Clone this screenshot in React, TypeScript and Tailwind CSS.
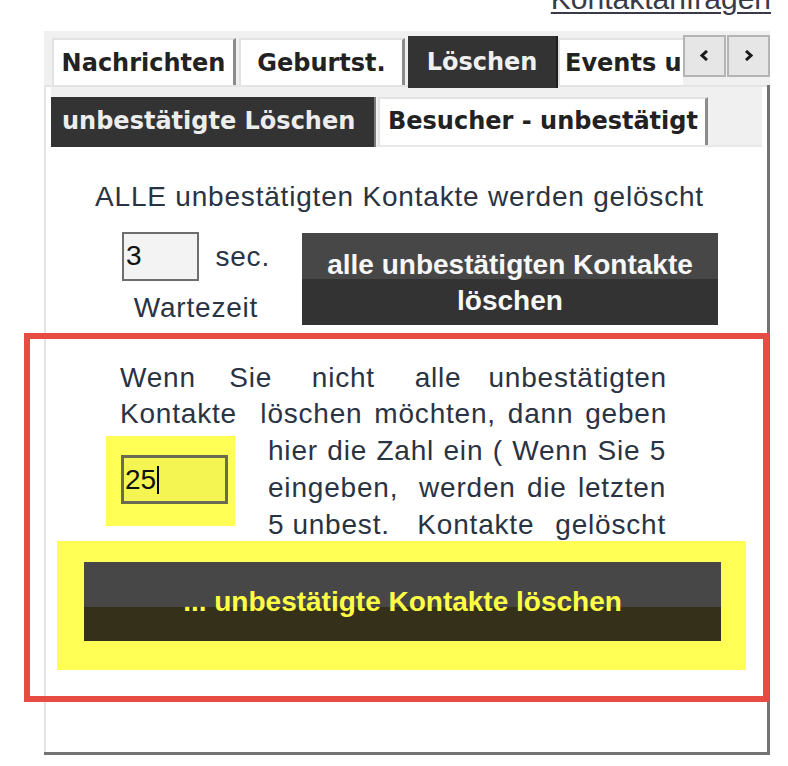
import React from "react";

const body = "font-['Liberation_Sans',Arial,sans-serif]";
const pix = "font-['DejaVu_Sans',Verdana,sans-serif] font-bold";

const grow: Record<number, string> = {
  0: "grow-0",
  1: "grow",
  2: "grow-[2]",
  3: "grow-[3]",
  4: "grow-[4]",
  5: "grow-[5]",
};

function Justified({ words, gaps }: { words: string[]; gaps: number[] }) {
  return (
    <div className="flex whitespace-nowrap">
      {words.map((w, i) => (
        <React.Fragment key={i}>
          {i > 0 && <span className={`basis-[8px] ${grow[gaps[i - 1]]}`} />}
          <span>{w}</span>
        </React.Fragment>
      ))}
    </div>
  );
}

function Tab({
  label,
  width,
  active = false,
  last = false,
}: {
  label: string;
  width: string;
  active?: boolean;
  last?: boolean;
}) {
  if (active) {
    return (
      <div
        className={`relative z-10 mb-[-3px] flex h-[52px] ${width} justify-center border-r-2 border-[#1f1f1f] bg-[#333333] pt-[14px] text-[24px] leading-[24px] text-[#f0f0f0]`}
      >
        {label}
      </div>
    );
  }
  return (
    <div
      className={`flex h-[47px] ${width} whitespace-nowrap border-l-2 border-t-2 border-[#e2e2e2] bg-white pt-[11px] text-[24px] leading-[24px] text-[#222] ${
        last ? "justify-start pl-[5px]" : "justify-center border-r-[3px] border-r-[#8c8c8c]"
      }`}
    >
      {label}
    </div>
  );
}

function Arrow({ dir }: { dir: "l" | "r" }) {
  return (
    <div className="flex h-[42px] w-[43px] justify-center border-2 border-[#b4b4b4] bg-[#e6e6e6] pt-[13px]">
      <svg width="9" height="11" viewBox="0 0 9 11">
        <polyline
          points={dir === "l" ? "7,1 2,5.5 7,10" : "2,1 7,5.5 2,10"}
          fill="none"
          stroke="#1a1a1a"
          strokeWidth="3"
        />
      </svg>
    </div>
  );
}

export default function App() {
  return (
    <div className={`relative h-[766px] w-[788px] overflow-hidden bg-white ${body}`}>
      {/* link cut off by the top edge */}
      <div className="flex h-[31px] justify-end pr-[17px]">
        <a className="mt-[-16px] h-[30px] text-[30px] leading-[30px] text-[#383a48] underline decoration-2 underline-offset-[3px]">
          Kontaktanfragen
        </a>
      </div>

      <div className="ml-[44px] w-[726px]">
        {/* main tab strip */}
        <div className={`flex h-[54px] items-end bg-[#f0f0f0] pl-[8px] ${pix}`}>
          <div className="flex flex-1 items-end gap-[3px]">
            <Tab label="Nachrichten" width="w-[184px]" />
            <Tab label="Geburtst." width="w-[166px]" />
          </div>
          <div className="flex items-end">
            <Tab label="Löschen" width="w-[150px]" active />
            <Tab label="Events u" width="w-[125px]" last />
          </div>
          <div className="mb-[8px] flex self-end gap-[1px]">
            <Arrow dir="l" />
            <Arrow dir="r" />
          </div>
        </div>

        {/* panel */}
        <div className="border-b-[3px] border-r-[3px] border-[#737373]">
          <div className="h-[667px] border-l-2 border-t-2 border-[#e4e4e4] bg-white px-[5px] pb-[4px]">
            {/* sub tabs */}
            <div className={`flex h-[58px] items-end bg-[#f0f0f0] ${pix}`}>
              <div className="relative z-10 mb-[-2px] h-[50px] w-[325px] border-r-2 border-[#7a7a7a] bg-[#333333] pl-[11px] pt-[12px] text-[24px] leading-[24px] text-[#ededed]">
                unbestätigte Löschen
              </div>
              <div className="ml-[2px] h-[48px] w-[330px] border-l-2 border-t-2 border-r-[3px] border-[#e2e2e2] border-r-[#8c8c8c] bg-white pl-[8px] pt-[10px] text-[24px] leading-[24px] text-[#222]">
                Besucher - unbestätigt
              </div>
            </div>

            {/* content */}
            <div className="h-[605px] border-t-2 border-[#e8e8e8] bg-white pt-[33px] text-[28px] tracking-[0.8px] text-[#2a3342]">
              <div className="pr-[14px] text-center leading-[34px]">
                ALLE unbestätigten Kontakte werden gelöscht
              </div>

              <div className="mt-[18px] flex pl-[71px]">
                <div className="flex w-[148px] flex-col items-center">
                  <div className="flex w-full items-center">
                    <div className="h-[49px] w-[78px] border-2 border-[#6e6e6e] bg-[#f3f3f3] pl-[2px] pt-[5px] leading-[34px] text-[#111]">
                      3
                    </div>
                    <span className="ml-[16px] leading-[34px]">sec.</span>
                  </div>
                  <div className="mt-[10px] leading-[34px]">Wartezeit</div>
                </div>
                <button className="ml-[32px] mt-[1px] h-[92px] w-[416px] bg-[linear-gradient(to_bottom,#474747_50%,#333333_50%)] pt-[8px] text-center text-[28px] font-bold leading-[36px] tracking-normal text-[#f7f7f7]">
                  <span className="block">alle unbestätigten Kontakte</span>
                  <span className="block">löschen</span>
                </button>
              </div>

              <div className="mt-[35px] w-[616px] pl-[69px] leading-[36px]">
                <Justified words={["Wenn", "Sie", "nicht", "alle", "unbestätigten"]} gaps={[4, 5, 5, 3]} />
                <Justified words={["Kontakte", "löschen", "möchten,", "dann", "geben"]} gaps={[4, 1, 1, 1]} />
              </div>
              <div className="flex pl-[55px]">
                <div className="mt-[4px] h-[90px] w-[129px] bg-[#ffff55] pl-[15px] pt-[19px]">
                  <div className="flex h-[49px] w-[107px] items-center border-[3px] border-[#6a6a55] bg-[#f4f452] pl-[1px] leading-[34px] tracking-normal text-[#111]">
                    25
                    <span className="ml-[1px] h-[28px] w-[2px] bg-black" />
                  </div>
                </div>
                <div className="ml-[33px] w-[398px] leading-[37px]">
                  <Justified words={["hier", "die", "Zahl", "ein", "(", "Wenn", "Sie", "5"]} gaps={[1, 1, 1, 1, 1, 1, 1]} />
                  <Justified words={["eingeben,", "werden", "die", "letzten"]} gaps={[4, 1, 1]} />
                  <Justified words={["5", "unbest.", "Kontakte", "gelöscht"]} gaps={[0, 3, 2]} />
                </div>
              </div>

              <div className="ml-[6px] mt-[-2px] h-[129px] w-[689px] bg-[#ffff55] pl-[27px] pt-[21px]">
                <button className="flex h-[79px] w-[637px] items-center justify-center bg-[linear-gradient(to_bottom,#474747_57%,#35301a_57%)] text-[28px] font-bold leading-[28px] tracking-normal text-[#ffff44]">
                  ... unbestätigte Kontakte löschen
                </button>
              </div>
            </div>
          </div>
        </div>
      </div>

      {/* red annotation frame drawn over the screenshot */}
      <div className="pointer-events-none absolute left-[24px] top-[333px] h-[369px] w-[745px] border-[6px] border-[#e84a44]" />
    </div>
  );
}
